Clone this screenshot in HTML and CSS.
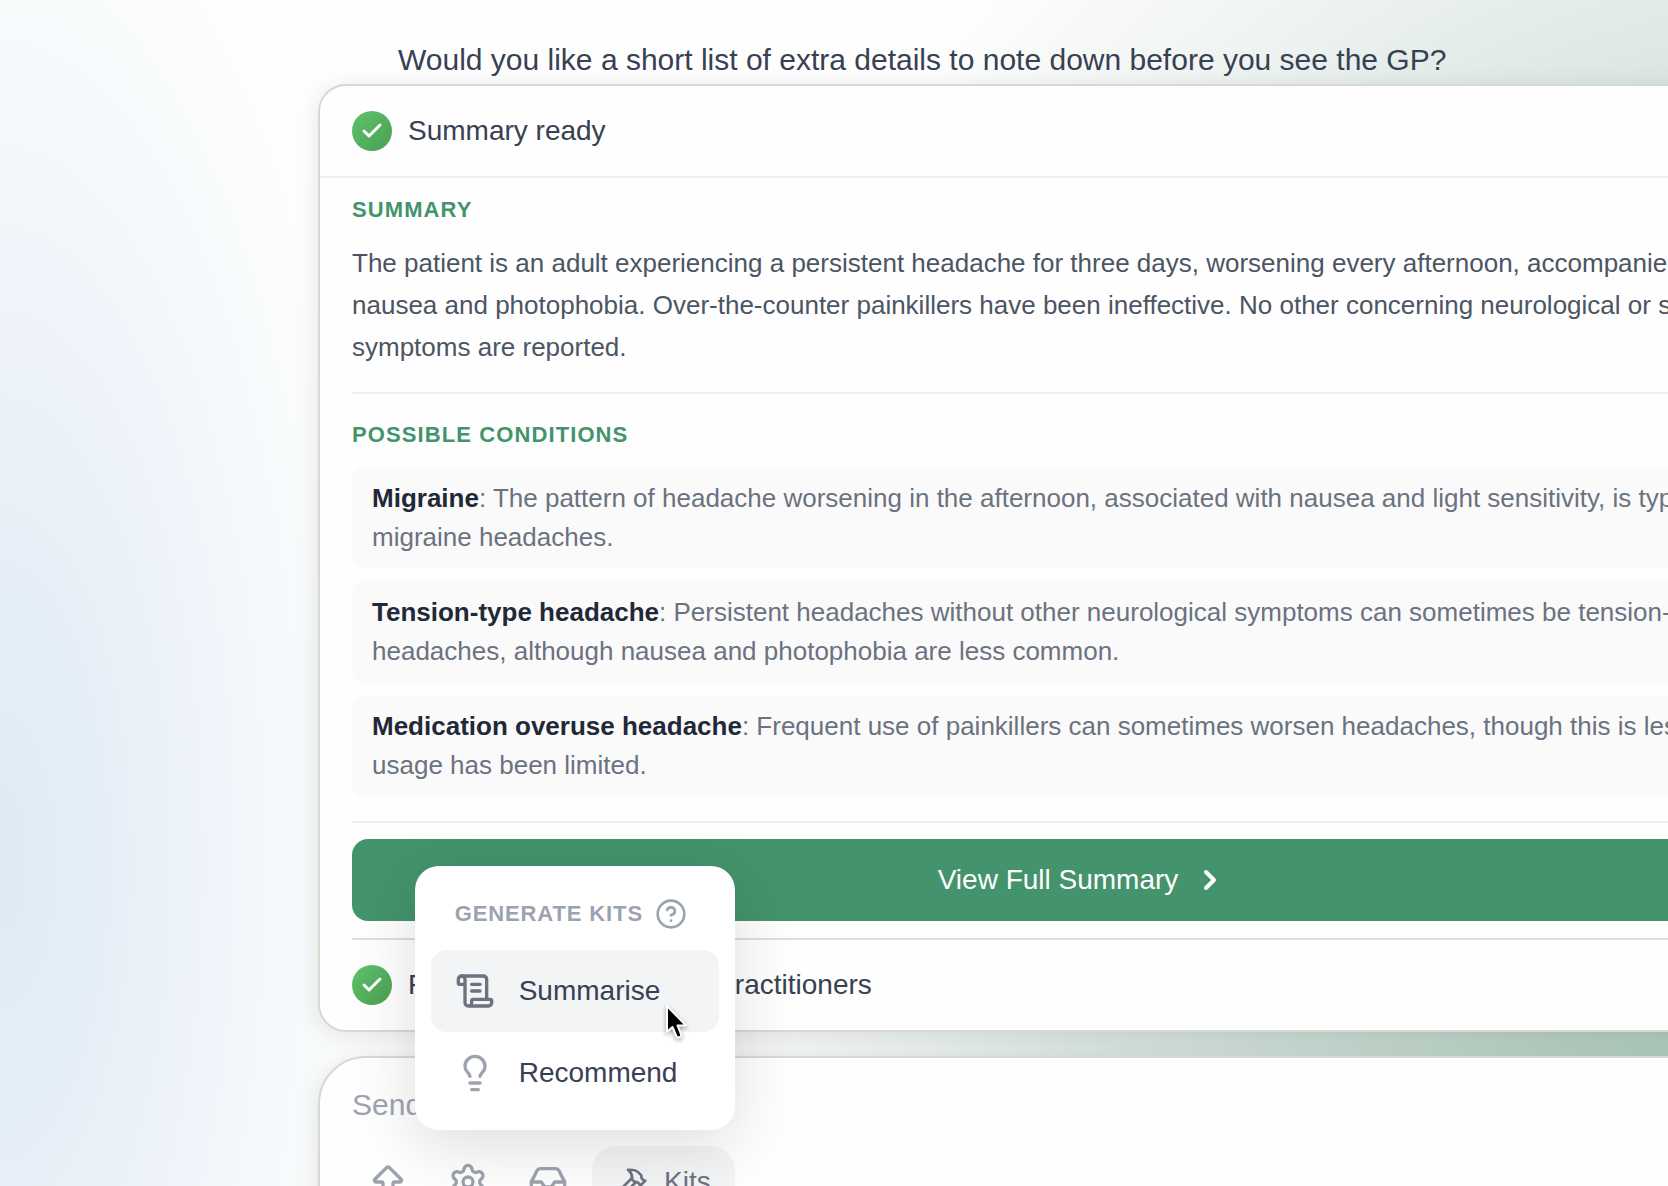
FILE: index.html
```html
<!DOCTYPE html>
<html lang="en">
<head>
<meta charset="utf-8">
<meta name="viewport" content="width=device-width, initial-scale=1">
<title>Summary ready</title>
<link rel="stylesheet" href="styles.css">
</head>
<body>
<main class="chat">
  <p class="question">Would you like a short list of extra details to note down before you see the GP?</p>

  <article class="card">
    <header class="step step-first">
      <span class="tick"><svg viewBox="0 0 24 24" aria-hidden="true"><path d="M20 6 9 17l-5-5"/></svg></span>
      <span>Summary ready</span>
    </header>

    <div class="card-body">
      <section class="summary">
        <h2 class="label">SUMMARY</h2>
        <p class="summary-text">The patient is an adult experiencing a persistent headache for three days, worsening every afternoon, accompanied by both nausea and photophobia. Over-the-counter painkillers have been ineffective. No other concerning neurological or systemic symptoms are reported.</p>
      </section>

      <section class="conditions">
        <h2 class="label">POSSIBLE CONDITIONS</h2>
        <ul class="condition-list">
          <li class="condition"><strong>Migraine</strong>: The pattern of headache worsening in the afternoon, associated with nausea and light sensitivity, is typical of migraine headaches.</li>
          <li class="condition"><strong>Tension-type headache</strong>: Persistent headaches without other neurological symptoms can sometimes be tension-type headaches, although nausea and photophobia are less common.</li>
          <li class="condition"><strong>Medication overuse headache</strong>: Frequent use of painkillers can sometimes worsen headaches, though this is less likely if usage has been limited.</li>
        </ul>
      </section>

      <div class="action">
        <button class="view-button" type="button">
          <span>View Full Summary</span>
          <svg class="icon icon-chevron" viewBox="0 0 24 24" aria-hidden="true"><path d="m9 18 6-6-6-6"/></svg>
        </button>
      </div>

      <div class="step step-next">
        <span class="tick"><svg viewBox="0 0 24 24" aria-hidden="true"><path d="M20 6 9 17l-5-5"/></svg></span>
        <span>Finding relevant medical practitioners</span>
      </div>
    </div>
  </article>

  <form class="composer">
    <textarea class="message" rows="1" placeholder="Send a message" aria-label="Message"></textarea>
    <div class="toolbar">
      <button class="tool" type="button" aria-label="Upload">
        <svg class="icon" viewBox="0 0 24 24" aria-hidden="true"><path d="M9 13a1 1 0 0 0-1-1H5.061a1 1 0 0 1-.75-1.811l6.836-6.835a1.207 1.207 0 0 1 1.707 0l6.835 6.835a1 1 0 0 1-.75 1.811H16a1 1 0 0 0-1 1v6a1 1 0 0 1-1 1h-4a1 1 0 0 1-1-1z"/></svg>
      </button>
      <button class="tool" type="button" aria-label="Settings">
        <svg class="icon" viewBox="0 0 24 24" aria-hidden="true"><path d="M9.671 4.136a2.34 2.34 0 0 1 4.659 0 2.34 2.34 0 0 0 3.319 1.915 2.34 2.34 0 0 1 2.33 4.033 2.34 2.34 0 0 0 0 3.831 2.34 2.34 0 0 1-2.33 4.033 2.34 2.34 0 0 0-3.319 1.915 2.34 2.34 0 0 1-4.659 0 2.34 2.34 0 0 0-3.32-1.915 2.34 2.34 0 0 1-2.33-4.033 2.34 2.34 0 0 0 0-3.831A2.34 2.34 0 0 1 6.35 6.051a2.34 2.34 0 0 0 3.319-1.915"/><circle cx="12" cy="12" r="3"/></svg>
      </button>
      <button class="tool" type="button" aria-label="Inbox">
        <svg class="icon" viewBox="0 0 24 24" aria-hidden="true"><path d="M22 12h-6l-2 3h-4l-2-3H2"/><path d="M5.45 5.11 2 12v6a2 2 0 0 0 2 2h16a2 2 0 0 0 2-2v-6l-3.45-6.89A2 2 0 0 0 16.76 4H7.24a2 2 0 0 0-1.79 1.11z"/></svg>
      </button>
      <div class="kits">
        <button class="kits-button" type="button" aria-haspopup="menu" aria-expanded="true">
          <svg class="icon icon-small" viewBox="0 0 24 24" aria-hidden="true"><path d="m15 12-8.373 8.373a1 1 0 1 1-3-3L12 9"/><path d="m18 15 4-4"/><path d="m21.5 11.5-1.914-1.914A2 2 0 0 1 19 8.172V7l-2.26-2.26a6 6 0 0 0-4.202-1.756L9 2.96l.92.82A6.18 6.18 0 0 1 12 8.4V10l2 2h1.172a2 2 0 0 1 1.414.586L18.5 14.5"/></svg>
          <span>Kits</span>
        </button>

        <div class="menu" role="menu">
          <div class="menu-head">
            <span>GENERATE KITS</span>
            <svg class="icon icon-small" viewBox="0 0 24 24" aria-hidden="true"><circle cx="12" cy="12" r="10"/><path d="M9.09 9a3 3 0 0 1 5.83 1c0 2-3 3-3 3"/><path d="M12 17h.01"/></svg>
          </div>
          <button class="menu-item menu-item-active" type="button" role="menuitem">
            <svg class="icon" viewBox="0 0 24 24" aria-hidden="true"><path d="M15 12h-5"/><path d="M15 8h-5"/><path d="M19 17V5a2 2 0 0 0-2-2H4"/><path d="M8 21h12a2 2 0 0 0 2-2v-1a1 1 0 0 0-1-1H11a1 1 0 0 0-1 1v1a2 2 0 1 1-4 0V5a2 2 0 1 0-4 0v2a1 1 0 0 0 1 1h3"/></svg>
            <span>Summarise</span>
            <svg class="pointer" viewBox="0 0 24 38" aria-hidden="true"><path d="M2 2v26l5.500-5 4 9.500c.5 1 1.200 1.200 2.200.8l1.600-.7c1-.5 1.200-1.200.8-2.100L12.500 21.500H21z"/></svg>
          </button>
          <button class="menu-item" type="button" role="menuitem">
            <svg class="icon" viewBox="0 0 24 24" aria-hidden="true"><path d="M15 14c.2-1 .7-1.700 1.500-2.500 1-.9 1.500-2.200 1.500-3.500A6 6 0 0 0 6 8c0 1 .2 2.200 1.500 3.500.7.7 1.300 1.500 1.500 2.500"/><path d="M9 18h6"/><path d="M10 22h4"/></svg>
            <span>Recommend</span>
          </button>
        </div>
      </div>
    </div>
  </form>
</main>
</body>
</html>
```

FILE: styles.css
```css
* {
  box-sizing: border-box;
}

body {
  margin: 0;
  height: 100vh;
  overflow: hidden;
  color: #374151;
  font-family: "Liberation Sans", Arial, sans-serif;
  font-size: 28px;
  line-height: 40px;
  background:
    radial-gradient(ellipse 400px 1080px at 0 860px, #deebf4 0%, #e6eff7 28%, #eef3fb 48%, #f5f9fb 70%, rgba(255, 255, 255, 0) 100%),
    radial-gradient(ellipse 1200px 1300px at 110% 900px, #a6c3b5 0%, #b4cdc1 25%, #d6e3dd 60%, #eff4f2 82%, rgba(255, 255, 255, 0) 100%),
    #fefefe;
}

h2,
p,
ul {
  margin: 0;
  padding: 0;
}

button {
  border: 0;
  background: none;
  color: inherit;
  font: inherit;
}

.icon {
  flex: none;
  width: 40px;
  height: 40px;
  fill: none;
  stroke: currentColor;
  stroke-width: 2;
  stroke-linecap: round;
  stroke-linejoin: round;
}

/* The conversation column runs past the right edge of the window. */
.chat {
  margin: 0 -178px 0 318px;
  padding-top: 36px;
}

.question {
  padding-left: 80px;
  font-size: 30px;
  line-height: 48px;
}

.card,
.composer {
  border: 2px solid #d8d7d0;
  background: #fefefe;
  box-shadow: 0 4px 24px rgba(0, 0, 0, 0.1);
}

.card {
  border-radius: 28px;
}

.card-body {
  padding: 0 32px;
}

.step {
  display: flex;
  align-items: center;
  gap: 16px;
  padding: 25px 0;
}

.step-first {
  padding: 25px 32px;
  border-bottom: 2px solid #efefef;
}

.step-next {
  border-top: 2px solid #deded8;
}

.tick {
  display: flex;
  align-items: center;
  justify-content: center;
  width: 40px;
  height: 40px;
  border-radius: 50%;
  background: linear-gradient(135deg, #5fc26c, #4a9f52);
}

.tick svg {
  width: 24px;
  height: 24px;
  fill: none;
  stroke: #fff;
  stroke-width: 3;
  stroke-linecap: round;
  stroke-linejoin: round;
}

.label {
  margin-bottom: 20px;
  color: #43936c;
  font-size: 22px;
  font-weight: 700;
  line-height: 24px;
  letter-spacing: 0.05em;
}

.summary {
  padding: 20px 0 24px;
  border-bottom: 2px solid #efefef;
}

.summary-text {
  color: #4b5563;
  font-size: 26px;
  line-height: 42px;
}

.conditions {
  padding: 29px 0 24px;
  border-bottom: 2px solid #efefef;
}

.condition-list {
  display: flex;
  flex-direction: column;
  gap: 12px;
  list-style: none;
}

.condition {
  padding: 12px 20px;
  border-radius: 12px;
  background: #fafafa;
  color: #6b7280;
  font-size: 26px;
  line-height: 39px;
}

.condition strong {
  color: #1f2937;
}

.action {
  padding: 16px 0 17px;
}

.view-button {
  display: flex;
  align-items: center;
  justify-content: center;
  gap: 16px;
  width: 100%;
  padding: 21px;
  border-radius: 16px;
  background: #43936c;
  color: #fff;
}

.icon-chevron {
  width: 32px;
  height: 32px;
  stroke-width: 3;
}

.composer {
  margin-top: 24px;
  padding: 24px 32px 32px;
  border-radius: 48px;
}

.message {
  display: block;
  width: 100%;
  height: 46px;
  padding: 0;
  border: 0;
  outline: 0;
  resize: none;
  background: none;
  color: #374151;
  font: inherit;
  font-size: 30px;
  line-height: 46px;
}

.message::placeholder {
  color: #9ca3af;
}

.toolbar {
  display: flex;
  gap: 8px;
  margin-top: 18px;
  color: #9ca3af;
}

.tool {
  display: flex;
  padding: 16px;
}

.kits {
  position: relative;
}

.kits-button {
  display: flex;
  align-items: center;
  gap: 16px;
  padding: 16px 24px;
  border-radius: 24px;
  background: #f3f4f6;
  color: #6b7280;
}

.icon-small {
  width: 32px;
  height: 32px;
}

.menu {
  position: absolute;
  right: 0;
  bottom: calc(100% + 16px);
  width: 320px;
  padding: 16px;
  border-radius: 24px;
  background: #fff;
  box-shadow: 0 16px 64px rgba(0, 0, 0, 0.13);
}

.menu-head {
  display: flex;
  align-items: center;
  gap: 12px;
  padding: 16px 24px 20px;
  color: #9ca3af;
  font-size: 22px;
  font-weight: 700;
  line-height: 32px;
  letter-spacing: 0.04em;
}

.menu-item {
  position: relative;
  display: flex;
  align-items: center;
  gap: 24px;
  width: 100%;
  padding: 21px 24px;
  border-radius: 16px;
  color: #374151;
  text-align: left;
}

.menu-item .icon {
  color: #9ca3af;
}

.menu-item-active {
  background: #f3f4f6;
}

.menu-item-active .icon {
  color: #6b7280;
}

.pointer {
  position: absolute;
  z-index: 1;
  right: 30px;
  bottom: -10px;
  width: 24px;
  height: 38px;
  overflow: visible;
  fill: #000;
  stroke: #fff;
  stroke-width: 2;
  stroke-linejoin: round;
  filter: drop-shadow(0 2px 2px rgba(0, 0, 0, 0.35));
}
```
